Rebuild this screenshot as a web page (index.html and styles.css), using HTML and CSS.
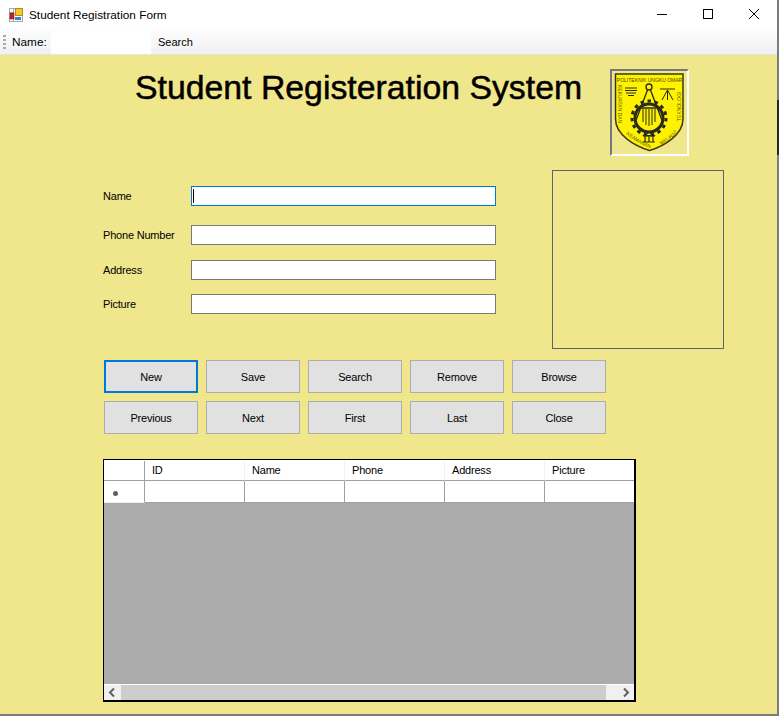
FILE: index.html
```html
<!DOCTYPE html>
<html lang="en">
<head>
<meta charset="utf-8">
<title>Student Registration Form</title>
<link rel="stylesheet" href="styles.css">
</head>
<body>
<div class="window">
  <header class="titlebar">
    <svg class="app-icon" width="14" height="14" viewBox="0 0 14 14">
      <rect width="14" height="14" fill="#fff"/>
      <path d="M0 .5H14M.5 0V14M0 13.500H14M13.500 0V14M0 4.500H5M0 9.500H5M4.500 0V14" stroke="#a8a8a8" fill="none"/>
      <rect x="6.500" y="0.500" width="7" height="7" fill="#f6c72a" stroke="#b08a20"/>
      <rect x="1" y="5" width="4" height="6" fill="#c8201c" stroke="#8a1a18" stroke-width=".6"/>
      <rect x="6" y="9" width="6" height="3" fill="#3f7fd8"/>
    </svg>
    <span class="title-text">Student Registration Form</span>
    <div class="caption">
      <svg width="46" height="30" viewBox="0 0 46 30"><path d="M18 14.5h10" stroke="#000" fill="none"/></svg>
      <svg width="46" height="30" viewBox="0 0 46 30"><rect x="18.5" y="9.5" width="9" height="9" stroke="#000" fill="none"/></svg>
      <svg width="46" height="30" viewBox="0 0 46 30"><path d="M18 9l10 10M28 9L18 19" stroke="#000" fill="none"/></svg>
    </div>
  </header>
  <div class="toolbar">
    <span class="grip"></span>
    <span class="tool-label">Name:</span>
    <span class="tool-input"></span>
    <span class="tool-search">Search</span>
  </div>
  <main class="client">
    <div class="head">
      <h1>Student Registeration System</h1>
      <div class="logo">
        <svg width="75" height="83" viewBox="0 0 75 83">
          <path d="M3.500 3H71V48C71 64 52 75 37.500 79.500C23 75 3.500 64 3.500 48Z" fill="#fff200" stroke="#3c3a10" stroke-width="1.500"/>
          <text x="37.500" y="11" text-anchor="middle" class="logo-top">POLITEKNIK UNGKU OMAR</text>
          <path id="arc-bottom" d="M14 63Q26 73 38 77Q41 76 45 75" fill="none"/>
          <path id="arc-right" d="M49 74C58 69 64 64 67 55" fill="none"/>
          <text class="logo-arc" transform="translate(6 14) rotate(90)">KEKUATAN DAN</text>
          <text class="logo-arc"><textPath href="#arc-bottom">KEAMANAN</textPath></text>
          <text class="logo-arc"><textPath href="#arc-right">MELALUI</textPath></text>
          <text class="logo-arc" transform="translate(69 50) rotate(-90)">TEKNOLOGI</text>
          <g fill="none" stroke="#2a2a1a">
            <circle cx="37" cy="47" r="14" stroke-width="3"/>
            <circle cx="37" cy="47" r="17" stroke-width="3" stroke-dasharray="3.500 3.600"/>
            <circle cx="37" cy="16" r="3" stroke-width="1.300"/>
            <path d="M35.500 19L23 52M38.500 19L51 52M27 37H47" stroke-width="1.300"/>
            <path d="M31 38V51M34 38V54M37 38V55M40 38V54M43 38V51" stroke-width="1"/>
            <path d="M13 17H25M13 19.500H25M14 22H24M16 24.500H22" stroke-width="1.200"/>
            <path d="M48 18H63M55.500 19L50 29M55.500 19V29M55.500 19L61 29" stroke-width="1"/>
            <path d="M31 65H43M31 71H43M33 65.500V71M37 65.500V71M41 65.500V71M37 61L32 64.500H42Z" stroke-width="1.200"/>
          </g>
        </svg>
      </div>
    </div>
    <div class="form-area">
      <div class="fields">
        <div class="row row-first">
          <label>Name</label>
          <span class="field focus"><span class="caret"></span></span>
        </div>
        <div class="row row-second">
          <label>Phone Number</label>
          <span class="field"></span>
        </div>
        <div class="row row-third">
          <label>Address</label>
          <span class="field"></span>
        </div>
        <div class="row row-fourth">
          <label>Picture</label>
          <span class="field"></span>
        </div>
      </div>
      <div class="picture"></div>
    </div>
    <div class="buttons">
      <button class="btn btn-active">New</button>
      <button class="btn">Save</button>
      <button class="btn">Search</button>
      <button class="btn">Remove</button>
      <button class="btn">Browse</button>
      <button class="btn">Previous</button>
      <button class="btn">Next</button>
      <button class="btn">First</button>
      <button class="btn">Last</button>
      <button class="btn">Close</button>
    </div>
    <div class="grid">
      <div class="grid-row grid-header">
        <span class="cell selector"></span>
        <span class="cell">ID</span>
        <span class="cell">Name</span>
        <span class="cell">Phone</span>
        <span class="cell">Address</span>
        <span class="cell last">Picture</span>
      </div>
      <div class="grid-row grid-new">
        <span class="cell selector"><span class="star"></span></span>
        <span class="cell"></span>
        <span class="cell"></span>
        <span class="cell"></span>
        <span class="cell"></span>
        <span class="cell last"></span>
      </div>
      <div class="grid-empty"></div>
      <div class="scrollbar">
        <svg class="arrow" width="17" height="15" viewBox="0 0 17 15"><path d="M10 3.500L6 7.500L10 11.500" fill="none" stroke="#606060" stroke-width="2"/></svg>
        <span class="thumb"></span>
        <svg class="arrow" width="17" height="15" viewBox="0 0 17 15"><path d="M7 3.500L11 7.500L7 11.500" fill="none" stroke="#606060" stroke-width="2"/></svg>
      </div>
    </div>
  </main>
</div>
<span class="behind"></span>
</body>
</html>
```

FILE: styles.css
```css
* { box-sizing: border-box; }
html, body { margin: 0; padding: 0; }
body {
  width: 779px;
  height: 716px;
  overflow: hidden;
  background: #7c7c78;
  position: relative;
  font-family: "Liberation Sans", Arial, sans-serif;
  font-size: 11px;
  letter-spacing: -0.2px;
  color: #000;
}
.window {
  width: 777px;
  height: 714px;
  display: flex;
  flex-direction: column;
  background: #f0e68c;
}
.titlebar {
  height: 30px;
  flex: none;
  background: #fff;
  display: flex;
  align-items: center;
  padding-left: 9px;
}
.app-icon { flex: none; margin-top: -1px; }
.title-text { margin-left: 6px; font-size: 11.800px; margin-top: -1px; letter-spacing: 0; }
.caption { margin-left: auto; display: flex; height: 30px; }
.caption svg { display: block; }
.toolbar {
  height: 25px;
  flex: none;
  display: flex;
  align-items: center;
  background: linear-gradient(#fdfdfd, #f1f1f3);
  border-bottom: 1px solid #e6e6e6;
  padding-left: 3px;
}
.grip {
  width: 3px;
  height: 14px;
  background: repeating-linear-gradient(#a9a9a9 0 2px, transparent 2px 4px);
}
.tool-label { margin-left: 6px; width: 39px; font-size: 11.800px; letter-spacing: 0; }
.tool-input { width: 100px; height: 23px; background: #fff; }
.tool-search { margin-left: 7px; letter-spacing: 0; }
.client { flex: 1; display: flex; flex-direction: column; min-height: 0; padding-left: 103px; }
.head { display: flex; height: 101px; padding-top: 14px; }
h1 {
  margin: 0;
  font-size: 33.800px;
  font-weight: 400;
  letter-spacing: 0;
  line-height: 37px;
  margin-left: 32px;
  width: 475px;
  white-space: nowrap;
  -webkit-text-stroke: 0.5px #000;
}
.logo {
  width: 79px;
  height: 87px;
  flex: none;
  border: 2px solid;
  border-color: #77787a #fff #fff #77787a;
}
.logo svg { display: block; }
.logo-top { font-size: 5px; letter-spacing: 0; fill: #4a4810; font-family: "Liberation Sans", sans-serif; }
.logo-arc { font-size: 5px; letter-spacing: 0; fill: #5a5812; font-family: "Liberation Sans", sans-serif; }
.form-area { display: flex; height: 204px; padding-top: 14px; }
.fields { width: 393px; margin-right: 56px; flex: none; }
.row { display: flex; align-items: center; height: 20px; }
.row-first { margin-top: 16px; }
.row-second { margin-top: 19px; }
.row-third { margin-top: 15px; }
.row-fourth { margin-top: 14px; }
label { width: 88px; flex: none; }
.field {
  width: 305px;
  height: 20px;
  background: #fff;
  border: 1px solid #7a7a7a;
  display: block;
  padding: 2px 1px;
}
.field.focus { border-color: #0078d7; }
.caret { display: block; width: 1px; height: 14px; background: #000; }
.picture {
  width: 172px;
  height: 179px;
  border: 1px solid #5d6471;
}
.buttons {
  display: grid;
  grid-template-columns: repeat(5, 94px);
  grid-auto-rows: 33px;
  gap: 8px;
  margin-left: 1px;
}
.btn {
  padding: 0;
  margin: 0;
  font: inherit;
  letter-spacing: inherit;
  color: #000;
  background: #e1e1e1;
  border: 1px solid #adadad;
  border-radius: 0;
}
.btn-active { border: 2px solid #0078d7; }
.grid {
  width: 533px;
  height: 243px;
  margin-top: 25px;
  border: 1px solid #000;
  border-width: 1px 2px 2px 1px;
  display: flex;
  flex-direction: column;
  background: #ababab;
  overflow: hidden;
}
.grid-row { display: grid; grid-template-columns: 41px repeat(5, 100px); flex: none; background: #fff; }
.grid-header { height: 21px; border-top: 1px solid #fff; }
.grid-header .cell { border-right: 1px solid #f0f0f0; border-bottom: 1px solid #a0a0a0; padding-left: 7px; line-height: 19px; }
.grid-header .selector { border-right-color: #a0a0a0; }
.grid-new { height: 22px; }
.grid-new .cell { border-right: 1px solid #a0a0a0; border-bottom: 1px solid #a0a0a0; }
.grid-header .last, .grid-new .last { border-right: 0; }
.grid-new .selector { border-bottom-color: #f0f0f0; }
.star { display: block; width: 5px; height: 5px; border-radius: 50%; background: #5f5f5f; margin: 10px 0 0 9px; }
.grid-empty { flex: 1; }
.scrollbar {
  height: 16px;
  flex: none;
  display: flex;
  align-items: center;
  background: #f0f0f0;
  border-top: 1px solid #fff;
}
.arrow { flex: none; display: block; }
.thumb { flex: 1; height: 15px; background: #cdcdcd; margin-right: 11px; }
.behind {
  position: absolute;
  right: 0;
  top: 100px;
  width: 2px;
  height: 55px;
  background: #25282a;
}
```
